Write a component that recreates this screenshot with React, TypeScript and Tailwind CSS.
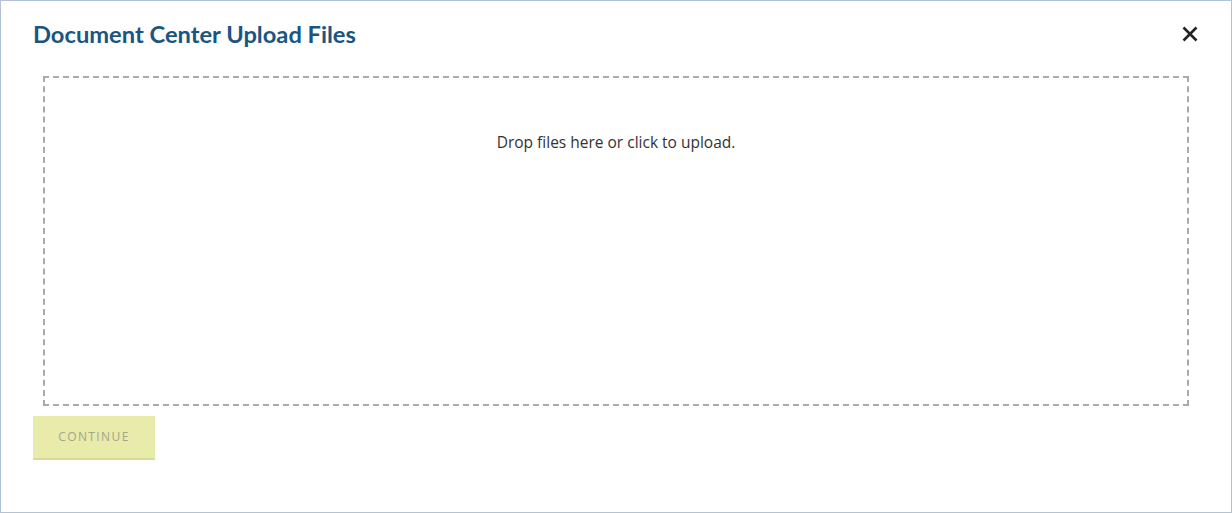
import React from 'react';

export default function App() {
  return (
    <div className="h-[513px] w-[1232px] border border-[#b4c3d3] bg-white px-[32px] font-['Lato',sans-serif]">
      <div className="flex items-center justify-between pt-[18px] pb-[27px]">
        <h2 className="text-[23.7px] font-bold leading-[30px] text-[#1b5582]">Document Center Upload Files</h2>
        <button className="mr-[-6px] flex h-[30px] w-[30px] items-center justify-center text-[#222]">
          <svg width="16" height="16" viewBox="0 0 16 16" fill="none" stroke="currentColor" strokeWidth="2.6" strokeLinecap="butt">
            <path d="M1.5 1.5 L14.5 14.5 M14.5 1.5 L1.5 14.5" />
          </svg>
        </button>
      </div>
      <div className="mx-[10px] h-[330px] cursor-pointer border-2 border-dashed border-[#aaaaaa] pt-[53px] text-center font-['Open_Sans',sans-serif] text-[15.5px] text-[#333]">
        Drop files here or click to upload.
      </div>
      <button
        disabled
        className="mt-[10px] h-[44px] w-[122px] border-b-2 border-[#d6dc95] bg-[#e8ebaa] font-['Open_Sans',sans-serif] text-[12px] tracking-[1.4px] text-[#a3a68a]"
      >
        CONTINUE
      </button>
    </div>
  );
}
